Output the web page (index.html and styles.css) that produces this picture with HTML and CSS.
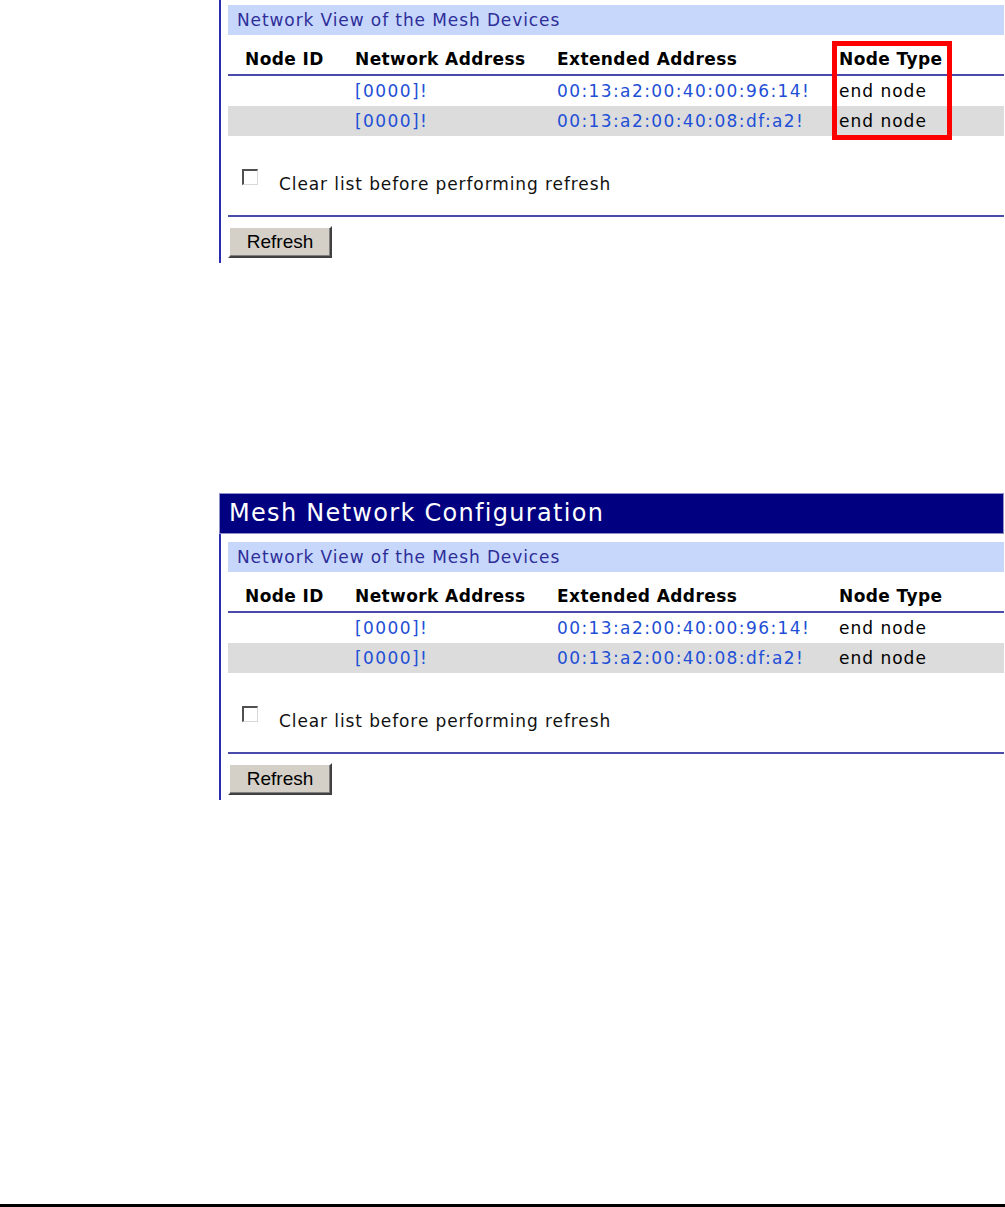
FILE: index.html
```html
<!DOCTYPE html>
<html lang="en">
<head>
<meta charset="utf-8">
<title>Mesh Network Configuration</title>
<link rel="stylesheet" href="styles.css">
</head>
<body>
<main class="page">
  <section class="panel panel-cropped">
    <div class="body">
      <div class="bar">Network View of the Mesh Devices</div>
      <div class="table">
        <div class="row head">
          <div class="c1">Node ID</div><div class="c2">Network Address</div><div class="c3">Extended Address</div><div class="c4">Node Type</div>
        </div>
        <div class="row">
          <div class="c1"></div><div class="c2 link">[0000]!</div><div class="c3 link">00:13:a2:00:40:00:96:14!</div><div class="c4">end node</div>
        </div>
        <div class="row alt">
          <div class="c1"></div><div class="c2 link">[0000]!</div><div class="c3 link">00:13:a2:00:40:08:df:a2!</div><div class="c4">end node</div>
        </div>
        <div class="highlight"></div>
      </div>
      <label class="check"><span class="box"></span><span>Clear list before performing refresh</span></label>
      <div class="sep"></div>
      <button class="btn" type="button">Refresh</button>
    </div>
  </section>

  <section class="panel panel-second">
    <div class="title">Mesh Network Configuration</div>
    <div class="body">
      <div class="bar">Network View of the Mesh Devices</div>
      <div class="table">
        <div class="row head">
          <div class="c1">Node ID</div><div class="c2">Network Address</div><div class="c3">Extended Address</div><div class="c4">Node Type</div>
        </div>
        <div class="row">
          <div class="c1"></div><div class="c2 link">[0000]!</div><div class="c3 link">00:13:a2:00:40:00:96:14!</div><div class="c4">end node</div>
        </div>
        <div class="row alt">
          <div class="c1"></div><div class="c2 link">[0000]!</div><div class="c3 link">00:13:a2:00:40:08:df:a2!</div><div class="c4">end node</div>
        </div>
      </div>
      <label class="check"><span class="box"></span><span>Clear list before performing refresh</span></label>
      <div class="sep"></div>
      <button class="btn" type="button">Refresh</button>
    </div>
  </section>
</main>
<div class="rule"></div>
</body>
</html>
```

FILE: styles.css
```css
html, body {
  margin: 0;
  padding: 0;
  background: #ffffff;
}
body {
  min-height: 100vh;
  display: flex;
  flex-direction: column;
  font-family: "DejaVu Sans", Verdana, sans-serif;
  font-size: 17px;
  letter-spacing: 0.9px;
  color: #000;
  overflow: hidden;
}
.page {
  padding-left: 219px;
}
.panel {
  width: 785px;
}
.panel-cropped .body {
  padding-top: 5px;
}
.panel-second {
  margin-top: 230px;
}
.title {
  box-sizing: border-box;
  height: 41px;
  background: #000080;
  border: 1px solid #8f8fc8;
  color: #ffffff;
  font-size: 24px;
  letter-spacing: 1.3px;
  line-height: 39px;
  padding-left: 9px;
}
.body {
  border-left: 2px solid #2b2bb0;
  padding: 8px 0 5px 7px;
}
.bar {
  height: 30px;
  line-height: 30px;
  background: #c6d7fb;
  color: #2e2e99;
  padding-left: 9px;
}
.table {
  position: relative;
}
.row {
  display: grid;
  grid-template-columns: 110px 202px 282px 1fr;
  height: 30px;
  line-height: 30px;
  padding-left: 17px;
  white-space: nowrap;
}
.row.head {
  box-sizing: content-box;
  height: 37px;
  align-items: end;
  border-bottom: 2px solid #4a4aaa;
  font-weight: bold;
  letter-spacing: 0.4px;
  padding-bottom: 2px;
}
.row.head > div {
  line-height: 26px;
}
.row.alt {
  background: #dcdcdc;
}
.c4 {
  letter-spacing: 1px;
}
.row.head .c4 {
  letter-spacing: 0.4px;
}
.link {
  color: #1e4fd6;
  letter-spacing: 1.4px;
}
.highlight {
  position: absolute;
  left: 604px;
  top: 6px;
  width: 110px;
  height: 89px;
  border: 5px solid #ff0000;
}
.check {
  display: flex;
  align-items: center;
  gap: 21px;
  margin-top: 33px;
  padding-left: 14px;
  height: 30px;
  color: #111;
}
.box {
  box-sizing: border-box;
  width: 16px;
  height: 16px;
  margin-top: -15px;
  background: #ffffff;
  border-top: 2px solid #505050;
  border-left: 2px solid #505050;
  border-bottom: 1px solid #d8d8d8;
  border-right: 1px solid #d8d8d8;
}
.sep {
  margin-top: 16px;
  height: 2px;
  background: #4a4aaa;
}
.btn {
  display: block;
  margin-top: 9px;
  box-sizing: border-box;
  width: 104px;
  height: 32px;
  padding: 0;
  background: #d4d0c8;
  color: #000;
  font-family: "Liberation Sans", Arial, sans-serif;
  font-size: 19px;
  letter-spacing: 0;
  border-top: 2px solid #ffffff;
  border-left: 2px solid #ffffff;
  border-right: 2px solid #404040;
  border-bottom: 2px solid #404040;
  box-shadow: inset -1px -1px 0 #808080;
}
.rule {
  margin-top: auto;
  margin-bottom: 0;
  height: 3px;
  background: #000000;
}
```
